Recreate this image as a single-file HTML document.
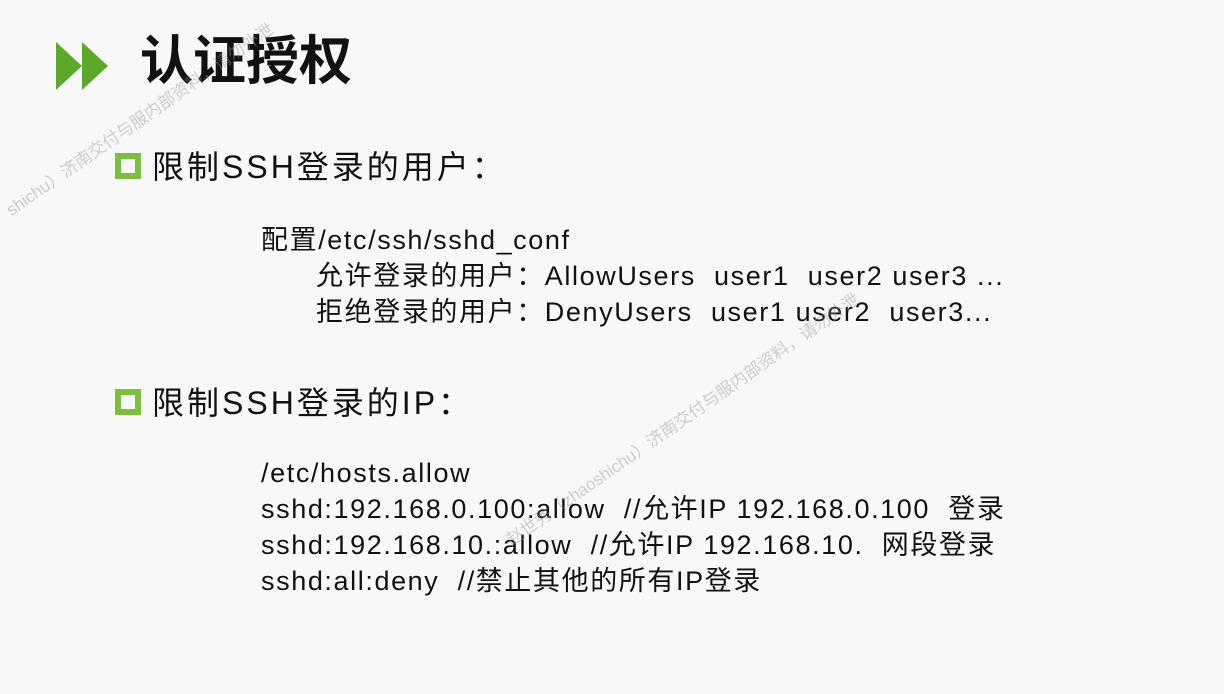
<!DOCTYPE html>
<html><head><meta charset="utf-8"><style>
body{margin:0;width:1224px;height:694px;background:#f8f8f8;overflow:hidden;position:relative;font-family:"Liberation Sans","Noto Sans CJK SC",sans-serif;color:#111}
.a{position:absolute;white-space:pre}
.t{font-size:53px;font-weight:bold;left:140px;top:30px;line-height:64px}
.h{font-size:32px;line-height:40px;letter-spacing:3px}
.b{font-size:27px;line-height:36px;letter-spacing:1.6px}
.sq{position:absolute;width:14px;height:14px;border:6px solid #7cbf3f}
.wm{position:absolute;color:rgba(150,150,150,.45);font-size:17px;white-space:pre;transform-origin:left top;transform:rotate(-35deg)}
</style></head><body>
<svg class="a" style="left:56px;top:42px" width="52" height="48"><polygon points="0,0 26,24 0,48" fill="#5ba82a"/><polygon points="26,0 52,24 26,48" fill="#5ba82a"/></svg>
<div class="a t">认证授权</div>
<div class="sq" style="left:115px;top:153px"></div>
<div class="a h" style="left:152px;top:147px">限制SSH登录的用户：</div>
<div class="a b" style="left:261px;top:222px">配置/etc/ssh/sshd_conf</div>
<div class="a b" style="left:316px;top:258px">允许登录的用户：AllowUsers  user1  user2 user3 ...</div>
<div class="a b" style="left:316px;top:294px">拒绝登录的用户：DenyUsers  user1 user2  user3...</div>
<div class="sq" style="left:115px;top:389px"></div>
<div class="a h" style="left:152px;top:383px">限制SSH登录的IP：</div>
<div class="a b" style="left:261px;top:455px">/etc/hosts.allow</div>
<div class="a b" style="left:261px;top:491px">sshd:192.168.0.100:allow  //允许IP 192.168.0.100  登录</div>
<div class="a b" style="left:261px;top:527px">sshd:192.168.10.:allow  //允许IP 192.168.10.  网段登录</div>
<div class="a b" style="left:261px;top:563px">sshd:all:deny  //禁止其他的所有IP登录</div>
<div class="wm" style="left:0px;top:200px">shichu）济南交付与服内部资料，请勿外泄</div>
<div class="wm" style="left:500px;top:530px">赵世秀（zhaoshichu）济南交付与服内部资料，请勿外泄</div>
</body></html>
